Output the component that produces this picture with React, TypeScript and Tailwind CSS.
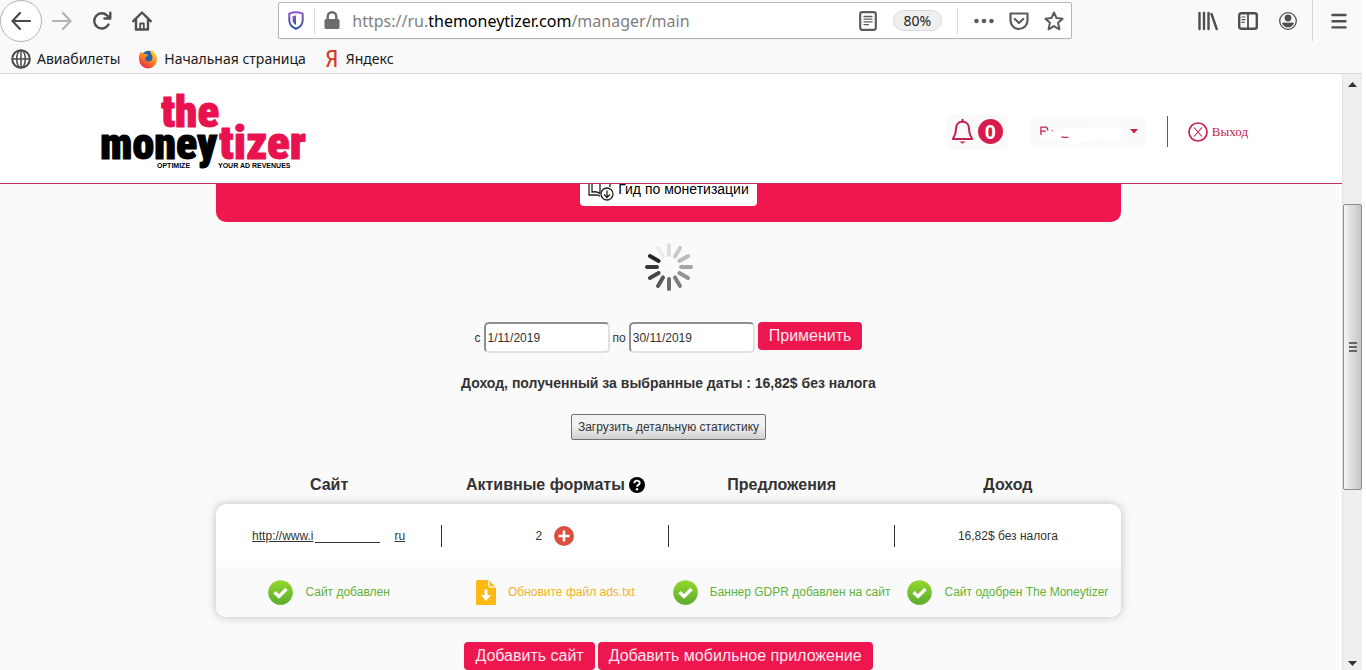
import React, { useState } from 'react'

interface SiteStatus {
  label: string
  kind: 'ok' | 'ads'
}

const statuses: SiteStatus[] = [
  { label: 'Сайт добавлен', kind: 'ok' },
  { label: 'Обновите файл ads.txt', kind: 'ads' },
  { label: 'Баннер GDPR добавлен на сайт', kind: 'ok' },
  { label: 'Сайт одобрен The Moneytizer', kind: 'ok' }
]

// Spokes run clockwise from twelve o'clock
const spokes = [
  '#dedede', '#cacaca', '#b9b9b9', '#a5a5a5', '#939393', '#7f7f7f',
  '#6b6b6b', '#585858', '#484848', '#383838', '#262626', '#ececec'
]

function NavButton({ label, children }: { label: string; children: React.ReactNode }) {
  return (
    <button aria-label={label} className="flex w-10 h-10 items-center justify-center text-[#4f4f4f]">
      <svg
        width="20"
        height="20"
        viewBox="0 0 20 20"
        fill="none"
        stroke="currentColor"
        strokeWidth="2.4"
        strokeLinecap="round"
        strokeLinejoin="round"
      >
        {children}
      </svg>
    </button>
  )
}

function BrowserToolbar() {
  const [address, setAddress] = useState('https://ru.themoneytizer.com/manager/main')

  return (
    <div className="flex h-[41px] items-center pr-[3px]">
      <button
        aria-label="Назад"
        className="flex w-[42px] h-[42px] shrink-0 items-center justify-center rounded-full border border-[#b5b5b5] bg-white text-[#4a4a4a]"
      >
        <svg width="20" height="20" viewBox="0 0 20 20" fill="none" stroke="currentColor" strokeWidth="2.2" strokeLinecap="round" strokeLinejoin="round">
          <path d="M19 10H1.500M9 2L1.500 10L9 18" />
        </svg>
      </button>
      <NavButton label="Вперёд">
        <path stroke="#b4b4b4" strokeWidth="2.200" d="M1 10H18.500M11 2L18.500 10L11 18" />
      </NavButton>
      <NavButton label="Обновить">
        <path d="M16.500 13.500A7.600 7.600 0 1 1 15 4.300L17.500 6.800M18.300 1.800V7.500H12.500" />
      </NavButton>
      <NavButton label="Домой">
        <path d="M1.300 10.200L10 1.500L18.700 10.200M4 8.500V18.500H16V8.500" />
        <path strokeWidth="1.800" d="M8.200 18V12.500H11.800V18" />
      </NavButton>
      <div className="w-[9%] shrink-0 -ml-1.5" />

      {/* Address bar */}
      <div className="flex h-[37px] min-w-0 flex-1 items-center rounded-xs border border-[#b6b6b6] bg-white pl-[9px] pr-[7px] shadow-xs">
        <svg width="16" height="19" viewBox="0 0 16 19" fill="none" className="shrink-0">
          <defs>
            <linearGradient id="shield" x1="0" y1="0" x2="0" y2="1">
              <stop offset="0" stopColor="#8a5ccc" />
              <stop offset="1" stopColor="#2f4fa5" />
            </linearGradient>
          </defs>
          <path d="M8 1.300C10.500 1.300 13 2 14.700 2.700V9C14.700 13 12 16.300 8 17.700C4 16.300 1.300 13 1.300 9V2.700C3 2 5.500 1.300 8 1.300Z" stroke="url(#shield)" strokeWidth="2" />
          <path d="M8 4.500V14C5.700 12.700 4.600 11 4.600 8.800V5C5.700 4.700 6.800 4.500 8 4.500Z" fill="url(#shield)" />
        </svg>
        <div className="ml-2.5 h-[26px] w-px shrink-0 bg-[#dcdcdc]" />
        <svg width="16" height="19" viewBox="0 0 16 19" className="ml-[9px] shrink-0">
          <rect x="0.500" y="8" width="15" height="10" rx="1.500" fill="#6c6c6c" />
          <path d="M3.700 9V5.500A4.300 4.300 0 0 1 12.300 5.500V9" fill="none" stroke="#6c6c6c" strokeWidth="2.400" />
        </svg>
        <label className="relative ml-3 min-w-0 flex-1 font-['Noto_Sans',sans-serif] text-base">
          <span aria-hidden="true" className="block truncate text-[#808080]">
            https://ru.<span className="text-black">themoneytizer.com</span>/manager/main
          </span>
          <input
            aria-label="Адрес"
            value={address}
            onChange={e => setAddress(e.target.value)}
            className="absolute inset-0 w-full bg-transparent text-transparent caret-black outline-none"
          />
        </label>
        <button aria-label="Режим чтения" className="shrink-0">
          <svg width="18" height="20" viewBox="0 0 18 20" fill="none" stroke="#5c5c5c" strokeLinecap="round">
            <rect x="1.200" y="1.200" width="15.600" height="17.600" rx="2" strokeWidth="2.200" />
            <path strokeWidth="1.300" d="M5 5.500H13M5 8.200H13M5 10.900H13M5 13.600H9.500" />
          </svg>
        </button>
        <button className="ml-4 h-[21px] w-[49px] shrink-0 rounded-full border border-[#d8d8d8] bg-[#efeff0] font-['Noto_Sans',sans-serif] text-sm leading-[19px] text-[#222]">
          80%
        </button>
        <div className="ml-[15px] h-[26px] w-px shrink-0 bg-[#dcdcdc]" />
        <button aria-label="Действия" className="ml-4 shrink-0">
          <svg width="20" height="20" viewBox="0 0 20 20" fill="#5c5c5c">
            <circle cx="2.500" cy="10" r="2.300" />
            <circle cx="10" cy="10" r="2.300" />
            <circle cx="17.500" cy="10" r="2.300" />
          </svg>
        </button>
        <button aria-label="Pocket" className="ml-[15px] shrink-0">
          <svg width="20" height="20" viewBox="0 0 20 20" fill="none" stroke="#5c5c5c" strokeWidth="2.200" strokeLinecap="round" strokeLinejoin="round">
            <path d="M1.500 2.500H18.500V9.500A8.500 8.500 0 0 1 1.500 9.500Z" />
            <path d="M5.800 8L10 12L14.200 8" />
          </svg>
        </button>
        <button aria-label="Добавить в закладки" className="ml-[15px] shrink-0">
          <svg width="20" height="20" viewBox="0 0 20 20" fill="none" stroke="#5c5c5c" strokeWidth="2" strokeLinejoin="round">
            <path d="M10 1.500L12.500 7L18.600 7.700L14.100 11.800L15.400 18.300L10 15.100L4.600 18.300L5.900 11.800L1.400 7.700L7.500 7Z" />
          </svg>
        </button>
      </div>

      <div className="w-[9%] shrink-0 -mr-1.5" />
      <NavButton label="Библиотека">
        <path d="M1.500 2V18M6 2V18M10.500 2V18" />
        <path d="M13.500 3L18.700 18" />
      </NavButton>
      <NavButton label="Боковая панель">
        <rect x="1.200" y="2.200" width="17.600" height="15.600" rx="2" />
        <path strokeWidth="1.800" d="M10 2.500V17.500" />
        <path strokeWidth="1.200" d="M4 6H7M4 8.700H7M4 11.400H6" />
      </NavButton>
      <NavButton label="Аккаунт">
        <circle cx="10" cy="10" r="8.300" strokeWidth="1.300" />
        <circle cx="10" cy="7" r="3.400" fill="currentColor" stroke="none" />
        <path d="M4 12.500C6 10.500 7 11.800 10 11.800S14 10.500 16 12.500C14.500 15.500 12.500 16.300 10 16.300S5.500 15.500 4 12.500Z" fill="currentColor" stroke="none" />
      </NavButton>
      <div className="ml-1 mr-1.5 h-full w-px bg-[#d5d5d5]" />
      <NavButton label="Меню">
        <path d="M3.500 4H16.500M3.500 10.200H16.500M3.500 16.400H16.500" />
      </NavButton>
    </div>
  )
}

function Bookmarks() {
  return (
    <nav className="flex h-8 items-center gap-[18px] pl-[11px] pt-[3px] font-['Noto_Sans',sans-serif] text-sm text-[#1a1a1a]">
      <a href="#avia" className="flex items-center gap-1.5">
        <svg width="20" height="20" viewBox="0 0 20 20" fill="none" stroke="#4a4a4a" strokeWidth="1.500">
          <circle cx="10" cy="10" r="8.800" strokeWidth="2" />
          <ellipse cx="10" cy="10" rx="4.300" ry="8.800" />
          <path d="M10 1V19M1 10H19" />
        </svg>
        Авиабилеты
      </a>
      <a href="#start" className="flex items-center gap-1.5">
        <svg width="20" height="20" viewBox="0 0 20 20">
          <defs>
            <linearGradient id="fox" x1="0.800" y1="0" x2="0.200" y2="1">
              <stop offset="0" stopColor="#ffde3a" />
              <stop offset="0.450" stopColor="#ff8a1f" />
              <stop offset="1" stopColor="#e5214c" />
            </linearGradient>
          </defs>
          <circle cx="10.500" cy="9" r="7.300" fill="#2a5fa8" />
          <path d="M1.500 5L3 2.500L5 5C6 4.500 7 4.500 8 5L10.300 6.500L8 8C6.500 9 7 12.500 10.500 12.500C14.500 12.500 15.500 9 13.500 5.500C13 4 12 2.500 12.500 1C16 2 19 5.500 19 10.500A9 9 0 0 1 1 10.500C0.800 8.500 1 6.500 1.500 5Z" fill="url(#fox)" />
        </svg>
        Начальная страница
      </a>
      <a href="#yandex" className="flex items-center gap-1.5">
        <span aria-hidden="true" className="w-4 text-center font-['Roboto_Condensed','Liberation_Sans',sans-serif] text-2xl leading-5 text-[#cf3a2a]">
          Я
        </span>
        Яндекс
      </a>
    </nav>
  )
}

function Logo() {
  return (
    <a href="#home" aria-label="The Moneytizer">
      <svg
        width="212"
        height="86"
        viewBox="0 0 212 86"
        className="font-['Roboto_Condensed','Liberation_Sans',sans-serif] font-black"
      >
        <g strokeWidth="1" strokeLinejoin="round">
          <text x="61" y="41" fontSize="45" fill="#e8124f" stroke="#e8124f">the</text>
          <text x="0" y="73" fontSize="44" fill="#000" stroke="#000">money</text>
          <text x="119" y="73" fontSize="47" fill="#e8124f" stroke="#e8124f">tizer</text>
        </g>
        <g fontSize="7" fill="#000" className="font-['Liberation_Sans',sans-serif] font-bold">
          <text x="57" y="82">OPTIMIZE</text>
          <text x="118" y="82">YOUR AD REVENUES</text>
        </g>
      </svg>
    </a>
  )
}

function SiteHeader() {
  return (
    <header className="flex h-[110px] shrink-0 items-center justify-between border-b border-b-[#c4305c] bg-white pl-[100px] pr-[94px]">
      <Logo />
      <div className="flex items-center pt-1.5 text-[#c4204a]">
        <button aria-label="Уведомления" className="flex h-9 w-[62px] items-center justify-center gap-1 rounded-sm bg-[#fafafa]">
          <svg width="23" height="26" viewBox="0 0 23 26" fill="none" stroke="currentColor" strokeWidth="2" strokeLinejoin="round">
            <path d="M11.500 2.500C7 2.500 5 6 5 10C5 15 3.500 17.500 1.800 20H21.200C19.500 17.500 18 15 18 10C18 6 16 2.500 11.500 2.500Z" />
            <path d="M11.500 0.500V3" strokeLinecap="round" />
            <path d="M8.500 22.500H14.500L11.500 24.800Z" fill="currentColor" stroke="none" />
          </svg>
          <span className="flex h-[25px] w-[25px] items-center justify-center rounded-full bg-[#d81b4c] text-xl font-bold text-white">0</span>
        </button>
        <button aria-label="Профиль" className="ml-[22px] flex h-[30px] w-[116px] items-center justify-between rounded-sm bg-[#fafafa] pl-2 pr-2">
          <svg width="94" height="28" viewBox="0 0 94 28">
            <path d="M1 23L5 15L30 10L80 9L86 12V22L50 23L36 28L28 25L14 19Z" fill="#fff" />
            <path d="M3 17V9H8Q10 9.500 10 12.500M3 13H8M14 12.500H15M24 19L27 19.500L31 19.500" fill="none" stroke="#c4204a" strokeWidth="1.300" />
          </svg>
          <svg width="8" height="5" viewBox="0 0 8 5" fill="currentColor" className="shrink-0">
            <path d="M0 0H8L4 4.500Z" />
          </svg>
        </button>
        <div className="ml-[21px] h-[31px] w-px bg-[#b5305c]" />
        <a href="#logout" className="ml-5 flex items-center gap-1 font-['Liberation_Serif',serif] text-[13px]">
          <svg width="20" height="20" viewBox="0 0 20 20" fill="none" stroke="currentColor">
            <circle cx="10" cy="10" r="9" strokeWidth="1.700" />
            <path d="M6 5.500L14 14.500M14 5.500L6 14.500" strokeWidth="1.100" />
          </svg>
          Выход
        </a>
      </div>
    </header>
  )
}

function StatusIcon({ kind }: { kind: SiteStatus['kind'] }) {
  if (kind === 'ads') {
    return (
      <svg width="20" height="25" viewBox="0 0 20 25" className="shrink-0">
        <path d="M1.500 0H12.500L20 7.500V23.500Q20 25 18.500 25H1.500Q0 25 0 23.500V1.500Q0 0 1.500 0Z" fill="#fbb913" />
        <path d="M12.800 0.500V5.500Q12.800 7.200 14.500 7.200H19.500" fill="none" stroke="#fff" strokeWidth="1.200" />
        <path d="M8.500 9.500H11.500V15H15L10 21L5 15H8.500Z" fill="#fff" />
      </svg>
    )
  }
  return (
    <svg width="25" height="25" viewBox="0 0 25 25" className="shrink-0">
      <defs>
        <linearGradient id="tick" x1="0" y1="0" x2="0" y2="1">
          <stop offset="0" stopColor="#93d92c" />
          <stop offset="1" stopColor="#5cab32" />
        </linearGradient>
      </defs>
      <circle cx="12.500" cy="12.500" r="12.300" fill="url(#tick)" />
      <path d="M6.500 12.300L11 16.500L18.500 9" fill="none" stroke="#fff" strokeWidth="3.400" />
    </svg>
  )
}

function Spinner() {
  return (
    <svg width="48" height="48" viewBox="0 0 48 48" strokeWidth="4" strokeLinecap="round" className="mx-auto mt-[21px]">
      {spokes.map((color, i) => (
        <path key={i} d="M24 2V12" stroke={color} transform={`rotate(${i * 30} 24 24)`} />
      ))}
    </svg>
  )
}

function DateForm() {
  const [from, setFrom] = useState('1/11/2019')
  const [to, setTo] = useState('30/11/2019')

  return (
    <form onSubmit={e => e.preventDefault()} className="mt-[31px] flex items-start justify-center gap-[3px] text-xs">
      <label className="flex items-center gap-[3px]">
        с
        <input
          value={from}
          onChange={e => setFrom(e.target.value)}
          className="h-[31px] w-[126px] rounded-[5px] border-2 border-t-[#8f8f8f] border-l-[#8f8f8f] border-r-[#e2e2e2] border-b-[#e2e2e2] bg-white px-0.5"
        />
      </label>
      <label className="flex items-center gap-[3px]">
        по
        <input
          value={to}
          onChange={e => setTo(e.target.value)}
          className="h-[31px] w-[126px] rounded-[5px] border-2 border-t-[#8f8f8f] border-l-[#8f8f8f] border-r-[#e2e2e2] border-b-[#e2e2e2] bg-white px-0.5"
        />
      </label>
      <button className="h-7 rounded-[4px] bg-[#ee164f] px-[11px] text-base leading-7 text-[#ffe8ee]">Применить</button>
    </form>
  )
}

function SitesTable() {
  return (
    <table className="mt-[33px] block w-full text-center text-xs">
      <thead className="block text-base leading-6 font-bold">
        <tr className="grid grid-cols-4">
          <th>Сайт</th>
          <th className="flex items-center justify-center gap-1">
            Активные форматы
            <svg width="16" height="16" viewBox="0 0 16 16">
              <circle cx="8" cy="8" r="8" fill="#000" />
              <path d="M5.300 6.200C5.300 2.800 10.700 2.800 10.700 6C10.700 7.900 8 7.800 8 9.800" fill="none" stroke="#fff" strokeWidth="1.900" />
              <circle cx="8" cy="12.200" r="1.200" fill="#fff" />
            </svg>
          </th>
          <th>Предложения</th>
          <th>Доход</th>
        </tr>
      </thead>
      <tbody className="mt-[7px] block overflow-hidden rounded-[10px] bg-white shadow-[0_0_10px_rgba(0,0,0,0.25)]">
        <tr className="grid h-[63px] grid-cols-4 items-center">
          <td className="flex h-[22px] items-center justify-center border-r border-[#333]">
            <a href="#site" className="flex">
              <span className="underline">http://www.i</span>
              <span className="ml-0.5 mr-[14px] mb-px w-[65px] border-b border-[#333]" />
              <span className="underline">ru</span>
            </a>
          </td>
          <td className="flex h-[22px] items-center justify-center gap-3 border-r border-[#333]">
            2
            <button aria-label="Добавить формат">
              <svg width="20" height="20" viewBox="0 0 20 20" className="block">
                <circle cx="10" cy="10" r="10" fill="#db4f40" />
                <path d="M10 4.500V15.500M4.500 10H15.500" stroke="#fff" strokeWidth="2.600" />
              </svg>
            </button>
          </td>
          <td className="h-[22px] border-r border-[#333]" />
          <td>16,82$ без налога</td>
        </tr>
        <tr className="grid h-[50px] grid-cols-4 items-center bg-[#fafafa]">
          {statuses.map(status => (
            <td
              key={status.label}
              className={
                status.kind === 'ok'
                  ? 'flex items-center justify-center gap-3 whitespace-nowrap text-[#62b236]'
                  : 'flex items-center justify-center gap-3 whitespace-nowrap text-[#f0b323]'
              }
            >
              <StatusIcon kind={status.kind} />
              {status.label}
            </td>
          ))}
        </tr>
      </tbody>
    </table>
  )
}

function Scrollbar() {
  return (
    <div aria-hidden="true" className="flex w-5 shrink-0 flex-col items-center border-l border-[#e4e4e4] bg-[#efefef] pt-2 pb-1">
      <svg width="9" height="5" viewBox="0 0 9 5" fill="#333">
        <path d="M4.500 0L9 5H0Z" />
      </svg>
      <div className="h-[20%] shrink-0" />
      <div className="flex h-[49%] w-full flex-col items-center justify-center gap-0.5 rounded-xs border border-[#8e8e8e] bg-linear-to-r from-[#f6f6f6] via-[#dadbdd] to-[#c4c5c8]">
        <div className="h-0.5 w-2 bg-[#666]" />
        <div className="h-0.5 w-2 bg-[#666]" />
        <div className="h-0.5 w-2 bg-[#666]" />
      </div>
      <svg width="9" height="5" viewBox="0 0 9 5" fill="#333" className="mt-auto">
        <path d="M0 0H9L4.500 5Z" />
      </svg>
    </div>
  )
}

export default function App() {
  return (
    <div className="flex h-screen flex-col overflow-hidden bg-white pr-1 font-['Liberation_Sans',sans-serif]">
      <div className="shrink-0 border-b border-[#dcdcdc] bg-[#f9f9fa]">
        <BrowserToolbar />
        <Bookmarks />
      </div>

      <div className="flex min-h-0 flex-1">
        <div className="flex min-w-0 flex-1 flex-col overflow-hidden bg-[#fafafa] text-[#333]">
          <SiteHeader />
          <main className="min-h-0 flex-1 overflow-hidden pr-[5px]">
            <div className="mx-auto w-full max-w-[905px]">
              {/* Banner, scrolled partly under the header */}
              <div className="flex h-[38px] items-end justify-center overflow-hidden rounded-b-[10px] bg-[#f0164f] pb-4">
                <button className="flex h-[34px] shrink-0 items-center gap-1 rounded-[4px] bg-white px-2 text-sm text-black">
                  <svg width="26" height="24" viewBox="0 0 26 24" fill="none" stroke="#222" strokeWidth="1.300">
                    <path d="M1 3V18H9Q11 18 12 19.500M1 3Q9 1 12 4V17M12 4Q15 1 22 3V10M4 2V15Q10 14 12 17" />
                    <circle cx="19" cy="17" r="6" fill="#fff" />
                    <path d="M19 13.500V20.500M16 17.500L19 20.500L22 17.500" />
                  </svg>
                  Гид по монетизации
                </button>
              </div>

              <Spinner />
              <DateForm />

              <p className="mt-5 text-center text-sm font-bold">
                Доход, полученный за выбранные даты : 16,82$ без налога
              </p>
              <button className="mx-auto mt-[21px] block h-[26px] rounded-xs border border-[#707070] bg-linear-to-b from-[#f2f2f2] from-45% to-[#d0d0d0] px-1.5 text-xs">
                Загрузить детальную статистику
              </button>

              <SitesTable />

              <div className="mt-[25px] flex justify-center gap-[3px] text-base leading-7 text-[#ffe8ee]">
                <button className="h-7 rounded-[4px] bg-[#ee164f] px-[11px]">Добавить сайт</button>
                <button className="h-7 rounded-[4px] bg-[#ee164f] px-[11px]">Добавить мобильное приложение</button>
              </div>
            </div>
          </main>
        </div>
        <Scrollbar />
      </div>
    </div>
  )
}
